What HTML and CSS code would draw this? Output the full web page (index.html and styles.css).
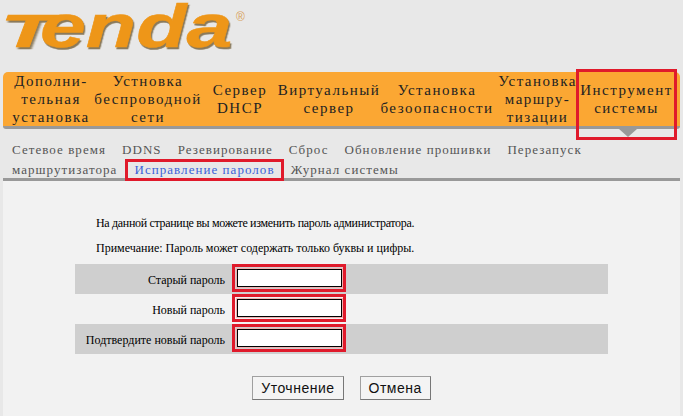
FILE: index.html
```html
<!DOCTYPE html>
<html>
  <head>
    <meta charset="UTF-8" />
    <title>Tenda</title>
    <link rel="stylesheet" href="styles.css">
  </head>

  <body>
    <svg class="logo" width="260" height="72" viewBox="0 0 260 72">
      <text class="logo-t" transform="translate(0 47) scale(1.95 1)">T</text>
      <text class="logo-rest" transform="translate(40 47) scale(1.33 1)">enda</text>
      <text class="logo-mark" x="236" y="21">®</text>
    </svg>

    <div class="menu">
      <a class="menu-item w1">Дополни-<br>тельная<br>установка</a>
      <a class="menu-item w2">Устновка<br>беспроводной<br>сети</a>
      <a class="menu-item w3">Сервер<br>DHCP</a>
      <a class="menu-item w4">Виртуальный<br>сервер</a>
      <a class="menu-item w5">Установка<br>безоопасности</a>
      <a class="menu-item w6">Установка<br>маршру-<br>тизации</a>
      <a class="menu-item w7 active">Инструмент<br>системы</a>
    </div>

    <div class="submenu">
      <div class="submenu-row">
        <a>Сетевое время</a>
        <a>DDNS</a>
        <a>Резевирование</a>
        <a>Сброс</a>
        <a>Обновление прошивки</a>
        <a>Перезапуск</a>
      </div>
      <div class="submenu-row">
        <a>маршрутизатора</a>
        <a class="current">Исправление паролов</a>
        <a>Журнал системы</a>
      </div>
    </div>

    <div class="panel">
      <p class="note first">На данной странице вы можете изменить пароль администратора.</p>
      <p class="note">Примечание: Пароль может содержать только буквы и цифры.</p>

      <div class="form-table">
        <div class="form-row shaded">
          <label>Старый пароль</label>
          <span class="field"><input type="password"></span>
        </div>
        <div class="form-row">
          <label>Новый пароль</label>
          <span class="field"><input type="password"></span>
        </div>
        <div class="form-row shaded">
          <label>Подтвердите новый пароль</label>
          <span class="field"><input type="password"></span>
        </div>
      </div>

      <div class="buttons">
        <button>Уточнение</button>
        <button>Отмена</button>
      </div>
    </div>
  </body>
</html>
```

FILE: styles.css
```css
body {
  margin: 0;
  height: 416px;
  background-color: #e8e8e8;
  font-family: "Liberation Serif", serif;
  color: #000;
  overflow: hidden;
}

.logo {
  display: block;
}

.logo-t,
.logo-rest {
  font-family: "Liberation Sans", sans-serif;
  font-style: italic;
  font-weight: bold;
  fill: #ee9618;
  stroke: #ee9618;
  stroke-width: 0.5px;
  filter: drop-shadow(1px 2px 0.5px #8a7a5c);
}

.logo-t {
  font-size: 46px;
}

.logo-rest {
  font-size: 62px;
}

.logo-mark {
  font-family: "Liberation Sans", sans-serif;
  font-size: 12px;
  fill: #d8a25c;
}

.menu {
  margin: 0 3px;
  height: 54px;
  display: flex;
  background-color: #fba733;
  border-bottom: 3px solid #999;
  border-radius: 5px 5px 3px 3px;
}

.menu-item {
  position: relative;
  display: flex;
  align-items: center;
  justify-content: center;
  text-align: center;
  white-space: nowrap;
  font-size: 15px;
  line-height: 18px;
  letter-spacing: 1.5px;
  color: #222;
}

.w1 { width: 96px; }
.w2 { width: 98px; }
.w3 { width: 86px; }
.w4 { width: 92px; }
.w5 { width: 124px; }
.w6 { width: 77px; }
.w7 { width: 101px; }

.active::before {
  content: "";
  position: absolute;
  left: 0;
  right: 0;
  top: -3px;
  bottom: -14px;
  border: 3px solid #e01a2b;
  box-sizing: border-box;
}

.active::after {
  content: "";
  position: absolute;
  left: 43px;
  bottom: -11px;
  border-left: 9px solid transparent;
  border-right: 9px solid transparent;
  border-top: 8px solid #999;
}

.submenu {
  margin-top: 11px;
  padding: 0 12px;
  height: 41px;
  font-size: 13px;
  letter-spacing: 1.05px;
  color: #555;
}

.submenu-row {
  height: 20px;
  display: flex;
  align-items: center;
  gap: 16px;
}

.submenu-row a {
  white-space: nowrap;
}

.current {
  color: #3a62d8;
  padding: 0 6px;
  margin: 0 -9px 0 -8px;
  border: 3px solid #e01a2b;
}

.panel {
  margin: -3px 3px 0;
  padding-top: 36px;
  height: 238px;
  box-sizing: border-box;
  background-color: #f2f2f2;
  border-top: 3px solid #999;
  font-size: 12px;
}

.note {
  margin: 0 0 12px 93px;
  line-height: 13px;
}

.note + .note {
  margin-bottom: 9px;
}

.first {
  letter-spacing: -0.32px;
}

.form-table {
  margin: 0 72px;
  width: 533px;
}

.form-row {
  height: 30px;
  display: flex;
  align-items: flex-start;
}

.shaded {
  background-color: #cfcfcf;
}

.form-row label {
  width: 150px;
  margin-right: 7px;
  line-height: 32px;
  text-align: right;
}

.field {
  display: flex;
  align-items: center;
  justify-content: center;
  width: 114px;
  height: 28px;
  box-sizing: border-box;
  border: 3px solid #e01a2b;
}

.field input {
  width: 105px;
  height: 18px;
  padding: 0;
  box-sizing: border-box;
  background-color: #fff;
  border: 1px solid #000;
  outline: 1px solid #f0b0b0;
}

.buttons {
  margin-top: 22px;
  display: flex;
  justify-content: center;
  gap: 16px;
}

.buttons button {
  height: 24px;
  padding: 0 8px;
  background-color: #f4f4f4;
  border: 1px solid #a0a0a0;
  border-right-color: #777;
  border-bottom-color: #777;
  font-family: "Liberation Sans", sans-serif;
  font-size: 14px;
  letter-spacing: 0.5px;
  color: #111;
}
```
